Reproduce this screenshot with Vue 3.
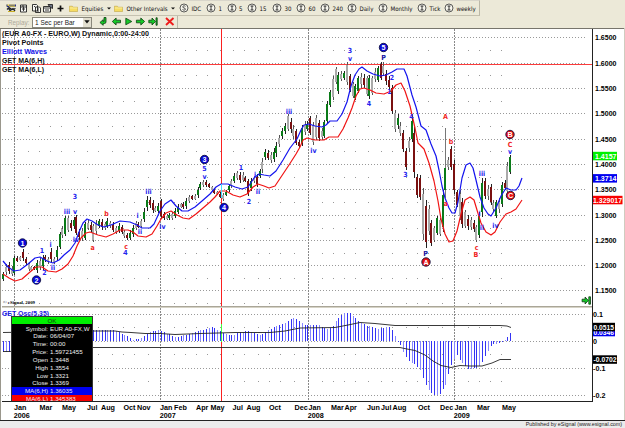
<template>
  <div class="window">
    <!-- Interval toolbar -->
    <div class="toolbar toolbar--intervals">
      <svg class="toolbar__icons" viewBox="0 0 69 15">
        <g>
          <path d="M6.5 3.5h9v2.5h-9z" fill="#e8d23c" />
          <path d="M7 3.5v2h2M10 3.5v2M12 3.5v2M14 3.5v2M15.5 3.5v2" stroke="#26309a" stroke-width="1" fill="none" />
          <path d="M7 8.5l2-2 3 2 3.5-1M8 6.5l2 3 3-2 2 2.5" stroke="#20242c" stroke-width="1.3" fill="none" />
          <path d="M8 10.5h7" stroke="#c9ae22" />
        </g>
        <g fill="#f8f8f4" stroke="#222" stroke-width=".9">
          <path d="M20.5 4h6v7h-6zM20.5 6h2.5V4M23.5 6h3M23.5 5.5V10M22 8h3" />
          <path d="M32.5 3.5h4l1 1V10h-5zM35.5 6h4l1 1v4.5h-5zM37 8h2M37 10h2M34 5.5h1" />
          <path d="M43.5 5.5h7v5.5h-7zM43.5 7h7M45 9h4" />
          <path d="M48 3.5h4.500v4L50 6z" fill="#6c7484" />
        </g>
        <path d="M60.5 4.5v6M57.5 7.5h6" stroke="#111" stroke-width="1.7" />
      </svg>
      <div v-for="menu in menus" :key="menu.label" class="menu" :style="{ width: menu.width + 'px' }">
        <svg class="menu__folder" viewBox="0 0 9 7">
          <path d="M.4 1.2h3l.7 1h4.5v4.300H.4z" fill="#f6dc62" stroke="#b69a34" stroke-width=".5" />
          <path d="M.8 3h7.5" stroke="#fff3a8" stroke-width=".8" />
        </svg>
        <span>{{ menu.label }}</span>
        <svg class="menu__caret" viewBox="0 0 4 3"><path d="M0 .5h4L2 2.6z" fill="#111" /></svg>
      </div>
      <div v-for="item in intervals" :key="item.label" class="interval" :style="{ width: item.width + 'px' }">
        <svg class="interval__icon" viewBox="0 0 10 10">
          <circle cx="5" cy="5" r="4" fill="#f7f6ee" stroke="#333" stroke-width=".8" />
          <path v-if="item.symbol" d="M6.5 3.3C5.5 2.4 3.6 2.8 3.7 4c.1 1.2 2.8.8 2.8 2.1 0 1.1-2 1.4-3 .4" fill="none" stroke="#222" stroke-width=".8" />
          <path v-else d="M3.5 3h3M5 3v4M3.5 7h3" stroke="#222" stroke-width=".9" />
        </svg>
        <span>{{ item.label }}</span>
      </div>
    </div>

    <!-- Replay toolbar -->
    <div class="toolbar toolbar--replay">
      <span class="replay__label">Replay:</span>
      <div class="replay__select">
        <span>1 Sec per Bar</span>
        <i class="replay__drop"><svg viewBox="0 0 6 4"><path d="M1 1h4L3 3.4z" fill="#111" /></svg></i>
      </div>
      <svg class="replay__icons" viewBox="92 16 85 12">
        <g fill="#16c928" stroke="#0b3d10" stroke-width=".8">
          <path d="M106 17.5v4.5q0 1.5-1.8 1.5h-1v1.8l-3.3-2.8 3.3-2.8v1.7h.8V17.5z" />
          <path d="M112.3 21.5l3.8-3.5v2.2h4.4v2.6h-4.4V25z" />
          <path d="M125.8 18.2l6 3.3-6 3.3z" />
          <path d="M144.6 21.5l-3.8-3.5v2.2h-4.4v2.6h4.4V25z" />
          <path d="M155.5 21.5L152 18v2.2h-3.2v2.6h3.2V25zM156 17.8h1.2v7.4H156z" />
        </g>
        <path d="M166 18l7.5 7M173.5 18l-7.5 7" stroke="#ee1c1c" stroke-width="1.9" />
      </svg>
    </div>

    <div class="chart">
      <svg class="chart__canvas" viewBox="0 28 625 393" width="625" height="393">
        <!-- Grid -->
        <g stroke="#999" stroke-width="1" stroke-dasharray="1 2" shape-rendering="crispEdges">
          <line v-for="y in gridY" :key="y" x1="2" :x2="587" :y1="y" :y2="y" />
          <line v-for="x in yearX" :key="x" :x1="x" :x2="x" y1="29" y2="401" stroke="#888" stroke-dasharray="2 1" />
        </g>
        <g fill="#999" shape-rendering="crispEdges">
          <rect v-for="(d, i) in dots" :key="i" :x="d[0]" :y="d[1]" width="1" height="1" />
        </g>

        <path d="M2 64.5h590.5" stroke="#fb3b3b" />
        <path d="M221.5 29V401" stroke="#fb2020" />

        <!-- Price bars -->
        <g shape-rendering="crispEdges">
          <g v-for="(b, i) in bars" :key="i">
            <rect :x="b.x" :y="b.high" width="1" :height="b.low - b.high" :fill="b.wick" />
            <rect :x="b.x - 1" :y="b.top" width="2" :height="b.bottom - b.top" :fill="b.color" />
          </g>
        </g>
        <polyline :points="maHigh" class="line line--blue" />
        <polyline :points="maLow" class="line line--red" />
        <path d="M221.5 184v14" stroke="#4df" />

        <!-- Wave counts -->
        <text v-for="(w, i) in waves" :key="'w' + i" :x="w[1]" :y="w[2] + 2.8" class="wave" :class="'wave--' + w[3]">{{ w[0] }}</text>
        <g v-for="(p, i) in pivots" :key="'p' + i">
          <circle :cx="p[1]" :cy="p[2]" r="4.2" :fill="p[3]" stroke="#101040" stroke-width=".9" />
          <text :x="p[1]" :y="p[2] + 2.6" class="pivot">{{ p[0] }}</text>
        </g>

        <!-- Studies legend -->
        <text v-for="t in titles" :key="t.text" x="2" :y="t.y" :textLength="t.w" lengthAdjust="spacingAndGlyphs" class="title" :fill="t.color || '#111'">{{ t.text }}</text>
        <text x="3" y="304.2" textLength="32" lengthAdjust="spacingAndGlyphs" class="copyright">© eSignal, 2009</text>

        <g fill="#13c926" stroke="#0a3a10" stroke-width=".8">
          <path d="M588.3 300.5l-3.2-3.5v2.2h-3v2.6h3v2.2zM588.8 296.8h1.7v7.4h-1.7z" />
        </g>

        <!-- Oscillator -->
        <rect x="2" y="306" width="590" height="1" fill="#aaa698" />
        <rect x="2" y="307" width="590" height="1" fill="#d6d3c6" />
        <g shape-rendering="crispEdges">
          <rect v-for="(o, i) in oscBars" :key="'o' + i" :x="o.x" :y="o.y" width="1" :height="o.h" :fill="o.color" />
        </g>
        <path d="M221.5 324v18" stroke="#4f4" />
        <polyline :points="oscUpper" class="band" />
        <polyline :points="oscLower" class="band" />

        <!-- Axes -->
        <path d="M592.5 28V401M2 401.5h591" stroke="#222" fill="none" />
        <text v-for="p in prices" :key="p[0]" x="595" :y="p[1] + 2.6" textLength="21.5" lengthAdjust="spacingAndGlyphs" class="axis">{{ p[0] }}</text>
        <text v-for="p in oscScale" :key="'s' + p[0]" x="593" :y="p[1] + 2.6" class="axis">{{ p[0] }}</text>
        <g v-for="t in tags" :key="t.text">
          <rect x="593" :y="t.y - 4.2" :width="t.w" height="8.5" :fill="t.bg" />
          <text :x="t.tx" :y="t.y + 2.6" :textLength="t.tw" lengthAdjust="spacingAndGlyphs" class="axis" fill="#fff">{{ t.text }}</text>
        </g>
        <text v-for="(m, i) in months" :key="'m' + i" :x="m[1]" y="409.5" class="axis">{{ m[0] }}</text>
        <text v-for="(x, i) in yearX" :key="'y' + i" :x="x - 0.7" y="418" class="axis">{{ 2006 + i }}</text>

        <path d="M0 420.5h625" stroke="#222" />
        <path d="M.5 28V420" stroke="#9a978c" />
        <path d="M624.5 28V420" stroke="#cfccc0" />
        <path d="M0 28.5h624" stroke="#77756c" />
        <text x="2" y="315.8" textLength="47" lengthAdjust="spacingAndGlyphs" class="title" fill="#2020e8">GET Osc(5,35)</text>
      </svg>

      <!-- Cursor data window -->
      <div class="cursor">
        <div class="cursor__ok">OK</div>
        <div v-for="r in readout" :key="r[0]" class="cursor__row" :class="r[2]">
          <span class="cursor__name">{{ r[0] }}</span>
          <span>{{ r[1] }}</span>
        </div>
      </div>
    </div>

    <div class="status">Published by eSignal (www.esignal.com)</div>
  </div>
</template>

<script setup>
const menus = [
  { label: 'Equities', width: 45 },
  { label: 'Other Intervals', width: 65 },
]

const intervals = [
  { label: 'IDC', width: 27, symbol: true },
  { label: '1', width: 20.5 },
  { label: '5', width: 20.5 },
  { label: '15', width: 25 },
  { label: '30', width: 24 },
  { label: '60', width: 24 },
  { label: '240', width: 27 },
  { label: 'Daily', width: 31 },
  { label: 'Monthly', width: 39 },
  { label: 'Tick', width: 27 },
  { label: 'weekly', width: 34 },
]

const titles = [
  { text: '(EUR A0-FX - EURO,W) Dynamic,0:00-24:00', y: 36.3, w: 147 },
  { text: 'Pivot Points', y: 45.3, w: 41.5 },
  { text: 'Elliott Waves', y: 54.4, w: 45, color: '#1010e8' },
  { text: 'GET MA(6,H)', y: 63.2, w: 42.5 },
  { text: 'GET MA(6,L)', y: 72.2, w: 42 },
]

const yearX = [14.5, 160.5, 308.5, 454.5]
const priceY = [37.5, 63.5, 88.5, 113.5, 139.5, 164.5, 189.5, 215.5, 240.5, 265.5, 290.5]
const gridY = [...priceY, 314.5, 341.5, 368.5, 395.5]

const monthOffsets = [14, 25, 36, 47, 60, 73, 84, 98, 109, 120, 134]
const dotRows = [50, 75, 101, 126, 151, 177, 202, 228, 253, 278, 303, 327, 354, 381]
const dots = []
for (const start of [14, 160, 308, 454]) {
  for (const off of monthOffsets) {
    if (start + off > 503) continue
    for (const y of dotRows) dots.push([start + off, y])
  }
}

const prices = priceY.map((y, i) => [(1.65 - i * 0.05).toFixed(4), y])
const oscScale = [['0.1', 314.5], ['0', 341.5], ['-0.1', 368.5], ['-0.2', 395.5]]

const tags = [
  { text: '1.4157', y: 156, w: 24, tx: 595, tw: 21.5, bg: '#00f000' },
  { text: '1.3714', y: 178.3, w: 24, tx: 595, tw: 21.5, bg: '#0000f0' },
  { text: '1.329017', y: 200, w: 29.5, tx: 593, tw: 29, bg: '#f80000' },
  { text: '0.0346', y: 332, w: 22, tx: 593.5, tw: 20.5, bg: '#0000f0' },
  { text: '0.0515', y: 327, w: 22, tx: 593.5, tw: 20.5, bg: '#000' },
  { text: '-0.0702', y: 359.5, w: 24, tx: 593.5, tw: 23, bg: '#000' },
]

const months = [
  ['Jan', 14], ['Mar', 39.5], ['May', 62], ['Jul', 87], ['Aug', 101], ['Oct', 123.5], ['Nov', 137],
  ['Jan', 160], ['Feb', 174], ['Apr', 196], ['May', 210.5], ['Jul', 232.5], ['Aug', 246.5], ['Oct', 269],
  ['Dec', 294.5], ['Jan', 308.5], ['Mar', 331], ['Apr', 344.5], ['Jun', 367], ['Jul', 381], ['Aug', 392.5],
  ['Oct', 418], ['Dec', 440], ['Jan', 454.5], ['Mar', 477], ['May', 502],
]

const readout = [
  ['Symbol:', 'EUR A0-FX,W'],
  ['Date:', '06/04/07'],
  ['Time:', '00:00'],
  ['Price:', '1.59721455'],
  ['Open', '1.3448'],
  ['High', '1.3554'],
  ['Low', '1.3321'],
  ['Close', '1.3369'],
  ['MA(6,H)', '1.36035', 'cursor__row--blue'],
  ['MA(6,L)', '1.345383', 'cursor__row--red'],
]

// high-low of every weekly bar, letter is the body colour
const barData = `272-281g 264-275k 262-274r 266-276k 256-275g 256-262r 256-261k 249-261r 257-265r 262-271k
266-271k 266-270r 260-273g 258-270k 255-270g 255-262r 257-264k 248-262r 257-264k 246-261g
232-249g 226-238k 216-236g 216-232k 220-231r 217-229g 215-235r 229-240r 228-241k 222-240g
220-230k 222-232r 224-242k 220-234k 219-228g 219-230r 222-230k 218-228g 221-228k 222-232r
226-234k 223-233g 225-234r 230-238k 233-240r 230-240g 225-237g 221-230k 222-228r 219-228k
208-222g 196-211g 197-208r 200-213r 206-212k 203-213g 199-218r 212-220r 214-220k 213-220g
212-220k 208-218g 204-214g 203-208k 202-209r 198-209g 195-203k 195-200r 194-200k 187-198g
182-190g 180-187k 180-187r 183-188r 186-191k 188-194r 191-195k 192-198r 193-201k 190-196g
184-192g 179-188k 173-183g 171-180k 172-183r 172-182k 176-182r 179-196r 178-191g 176-183k
174-187r 169-178g 158-173k 149-160g 150-160r 152-163k 148-162g 142-157g 135-147k 128-139g
123-134g 114-131k 118-133r 125-139k 129-145r 140-148r 125-146g 121-135k 121-131g 116-135r
122-145k 115-140k 120-141r 128-140k 120-138g 101-124g 90-107g 76-100k 67-84k 72-94g
71-81k 71-80g 62-85k 74-92r 82-98k 84-100g 76-93g 73-88k 74-88r 76-96k
75-99g 76-95k 68-82k 66-82g 62-80r 62-76k 70-85r 76-90r 85-114r 110-132k
114-129g 122-136k 130-152r 148-170r 137-152k 118-142g 127-178r 174-198r 175-200r 188-240k
200-248r 205-235k 220-246r 226-242k 216-235g 218-236k 190-232g 128-198g 157-170k 146-170r
160-194r 190-207r 190-220k 198-228r 210-228k 215-230r 217-230k 220-232r 225-242k 212-238g
178-217g 178-199r 185-200k 184-205r 200-212k 200-218g 198-213k 182-207g 180-190r 162-195k
155-174g`

const bodyColors = { g: '#0a7a18', r: '#7a1010', k: '#aaa' }
const step = 2.817

const bars = barData.split(/\s+/).map((s, i) => {
  const kind = s.slice(-1)
  const [high, low] = s.slice(0, -1).split('-').map(Number)
  const range = low - high
  const bar = {
    x: Math.round(3.2 + i * step),
    high,
    low,
    top: Math.round(high + range * (range > 15 ? 0.12 : 0.25)),
    bottom: Math.round(low - range * (range > 15 ? 0.12 : 0.25)),
    wick: kind === 'k' ? '#555' : '#222',
    color: bodyColors[kind],
  }
  // the December 2008 spike closes far below its high
  if (high === 128 && low === 198) {
    bar.top = 168
    bar.wick = '#777'
  }
  return bar
})

const maHigh = '3,261 8,267 14,271 20,270 28,264 35,258 40,257 47,261 53,263 59,260 64,255 70,250 75,243 79,232 83,223 87,219 92,221 98,225 104,227 111,225 120,221 130,222 137,225 142,228 150,228 154,224 160,211 165,204 171,200 176,206 182,211 188,211 195,207 202,201 210,194 216,187 221,184 228,184 235,187 242,189 248,187 254,178 259,174 264,175 270,176 276,171 283,160 290,148 297,139 301,130 304,125 309,124 315,126 322,127 326,125 330,121 337,121 342,114 347,102 351,86 355,75 359,69 362,67 367,71 373,74 380,76 386,75 392,72 397,69 404,69 407,76 412,95 416,107 421,126 426,130 431,144 436,156 439,170 442,186 445,198 449,208 452,213 455,213 458,202 462,178 466,165 470,163 473,168 476,180 480,197 484,208 488,214 491,216 496,208 501,196 506,188 511,190 516,190 519,186 522,178'
const maLow = '3,274 9,278 15,281 22,279 30,272 36,267 42,267 48,271 56,272 62,269 68,264 73,256 77,246 81,238 86,233 90,232 98,235 106,237 113,234 120,230 128,230 133,232 138,236 146,237 152,234 157,226 161,219 166,213 171,211 177,215 183,218 189,219 196,214 203,208 210,202 215,197 220,191 226,191 233,195 240,197 247,194 253,187 258,184 264,186 269,188 275,186 281,177 289,165 296,154 300,147 303,140 307,138 315,140 324,140 329,137 338,137 343,129 348,118 352,108 356,96 360,89 364,88 370,90 376,93 384,94 391,91 396,85 401,83 405,91 410,106 415,128 418,143 424,149 429,163 434,181 438,201 441,219 445,234 449,242 453,241 457,231 461,214 465,200 470,197 474,200 477,210 481,223 486,232 491,235 495,232 500,222 506,214 511,212 516,209 522,200'

const waves = [
  ['1', 42, 250, 'blue'], ['i', 50.5, 244, 'blue'], ['2', 44.5, 272, 'blue'], ['ii', 53, 267, 'blue'],
  ['iii', 67, 211.5, 'blue'], ['v', 75, 211, 'blue'], ['3', 75, 196.5, 'blue'], ['iv', 76, 239.5, 'blue'],
  ['a', 92.5, 247, 'red'], ['b', 106.5, 213.5, 'red'], ['c', 126, 246, 'red'], ['4', 125.5, 252.5, 'blue'],
  ['i', 137.5, 215.5, 'blue'], ['ii', 140, 231, 'blue'], ['iii', 148.5, 191, 'blue'], ['iv', 162.5, 226.5, 'blue'],
  ['5', 204.5, 168, 'blue'], ['v', 204.5, 176.5, 'blue'],
  ['1', 241, 167.5, 'blue'], ['i', 255, 174, 'blue'], ['2', 249, 201, 'blue'], ['ii', 258, 191.5, 'blue'],
  ['iii', 289, 111, 'blue'], ['iv', 313.5, 150, 'blue'],
  ['3', 350, 50, 'blue'], ['v', 350, 58, 'blue'], ['4', 369, 103, 'blue'], ['P', 383.5, 57, 'navy'],
  ['2', 392, 77, 'blue'], ['1', 389.5, 91.5, 'blue'], ['4', 411.5, 116, 'blue'], ['3', 405.5, 174.5, 'blue'],
  ['P', 425.5, 253.5, 'navy'], ['A', 445.5, 116.5, 'red'], ['b', 451, 141.5, 'red'], ['a', 445.5, 203, 'red'],
  ['iii', 482, 173, 'blue'], ['i', 479.5, 213, 'blue'], ['ii', 482, 227, 'blue'], ['iv', 495.5, 225.5, 'blue'],
  ['c', 476.5, 247.5, 'red'], ['B', 476, 254.5, 'red'], ['C', 510, 144, 'red'], ['v', 510, 151.5, 'blue'],
]

const pivots = [
  ['1', 22.5, 243, '#0808d8'], ['2', 36.5, 280, '#0808d8'], ['3', 204.5, 159.5, '#0808d8'],
  ['4', 224, 207.5, '#0808d8'], ['5', 383.5, 47.5, '#0808d8'],
  ['A', 426, 262, '#e81010'], ['B', 510, 134.5, '#e81010'], ['C', 510.5, 195.5, '#e81010'],
]

// oscillator envelope, bars are interpolated between these
const oscPoints = [
  [3, 352], [10, 352], [11, 341], [60, 330], [115, 330], [121, 333], [128, 337], [134, 340], [141, 338], [150, 332], [158, 330],
  [168, 334], [176, 337], [188, 334], [198, 331], [208, 328], [213, 327], [219, 331], [229, 335], [233, 335], [240, 332],
  [247, 331], [253, 333], [260, 335], [270, 329], [277, 326], [285, 323], [292, 318], [298, 320], [305, 325], [318, 325],
  [327, 329], [333, 326], [338, 318], [343, 313], [350, 313], [358, 321], [368, 326], [378, 329], [388, 326], [393, 331],
  [397, 340], [399, 343], [403, 352], [408, 361], [413, 363], [420, 370], [425, 383], [430, 392], [435, 396], [440, 394],
  [445, 385], [448, 374], [452, 362], [457, 355], [462, 363], [468, 369], [476, 368], [481, 364], [486, 354], [492, 344],
  [500, 343], [502, 341], [505, 340], [508, 336], [511, 331],
]

function oscAt(x) {
  const k = oscPoints.findIndex((p) => p[0] >= x)
  if (k < 1) return oscPoints[k < 0 ? oscPoints.length - 1 : 0][1]
  const [x0, y0] = oscPoints[k - 1]
  const [x1, y1] = oscPoints[k]
  return y0 + ((y1 - y0) * (x - x0)) / (x1 - x0)
}

const oscBars = bars.map((b, i) => {
  const y = Math.round(oscAt(b.x))
  return {
    x: b.x,
    y: Math.min(y, 341),
    h: Math.max(1, Math.abs(y - 341)),
    color: i % 3 === 1 ? '#8888ff' : '#3434f4',
  }
})

const oscUpper = '3,332.5 93,331 115,331 122,332 131,332.5 145,333.5 160,333.5 175,334.5 200,333.5 235,332.5 270,332.5 285,331 300,328 335,327.5 348,325 360,322.5 375,323.5 395,325.5 500,325.5 507,326 511,327.5'
const oscLower = '3,351.5 10,351.5 30,347.5 400,347.5 407,349 415,350.5 425,355 433,361 441,365.5 451,367.5 460,365.5 470,366 482,366 492,363 500,359.5 511,359.5'
</script>

<style>
body {
  margin: 0;
  background: #ece9d8;
}
</style>

<style scoped>
.window {
  width: 625px;
  height: 428px;
  display: flex;
  flex-direction: column;
  overflow: hidden;
  background: #ece9d8;
  font-family: 'Liberation Sans', Arial, sans-serif;
  font-size: 6.5px;
  color: #222;
}

/* Toolbars */
.toolbar {
  box-sizing: border-box;
  display: flex;
  align-items: center;
  flex-shrink: 0;
  white-space: nowrap;
  border-right: 1px solid #bbb8a8;
  border-bottom: 1px solid #c5c1b0;
}

.toolbar--intervals {
  width: 480px;
  height: 16px;
  border-top: 1px solid #d8d5ca;
  font-family: 'DejaVu Sans Condensed', 'DejaVu Sans', sans-serif;
  font-size: 6.1px;
  color: #111;
}

.toolbar--replay {
  width: 178px;
  height: 12px;
  border-bottom: 0;
}

.toolbar__icons {
  width: 69px;
  height: 15px;
  flex-shrink: 0;
}

.menu,
.interval {
  display: flex;
  align-items: center;
  flex-shrink: 0;
}

.menu {
  gap: 3.5px;
}

.menu__folder {
  width: 9px;
  height: 7px;
}

.menu__caret {
  width: 4px;
  height: 3px;
}

.interval {
  gap: 2.5px;
}

.interval__icon {
  width: 10px;
  height: 10px;
}

.replay__label {
  box-sizing: border-box;
  flex-shrink: 0;
  width: 32px;
  padding-left: 8px;
  color: #aca899;
  font-size: 6.3px;
}

.replay__select {
  box-sizing: border-box;
  flex-shrink: 0;
  width: 60px;
  height: 11px;
  display: flex;
  align-items: center;
  justify-content: space-between;
  padding-left: 2px;
  border: 1px solid #8a887c;
  background: #fff;
}

.replay__drop {
  width: 8px;
  height: 9px;
  display: flex;
  align-items: center;
  background: #e2dfd0;
}

.replay__icons {
  width: 85px;
  height: 12px;
  flex-shrink: 0;
}

/* Chart */
.chart {
  position: relative;
  height: 393px;
  background: #fff;
}

.chart__canvas {
  display: block;
}

.line {
  fill: none;
  stroke-width: 1.2;
  stroke-linejoin: round;
}

.line--blue {
  stroke: #1414ee;
}

.line--red {
  stroke: #f01414;
}

.band {
  fill: none;
  stroke: #222;
  stroke-width: 0.9;
}

.title {
  font-size: 7.5px;
  font-weight: 700;
}

.copyright {
  font-family: 'Liberation Serif', serif;
  font-size: 5px;
  font-weight: 700;
}

.axis {
  font-size: 7.2px;
  font-weight: 700;
}

.wave {
  font-family: 'DejaVu Sans Condensed', 'DejaVu Sans', sans-serif;
  font-size: 7px;
  font-weight: 700;
  text-anchor: middle;
}

.wave--blue {
  fill: #2424ee;
}

.wave--red {
  fill: #f02424;
}

.wave--navy {
  fill: #1010a0;
}

.pivot {
  font-size: 7.2px;
  font-weight: 700;
  text-anchor: middle;
  fill: #fff;
}

/* Cursor data window */
.cursor {
  position: absolute;
  left: 11px;
  top: 288px;
  box-sizing: border-box;
  width: 82px;
  height: 85px;
  overflow: hidden;
  border: 1px solid #333;
  border-bottom: 0;
  background: #000;
  color: #eee;
  font-size: 6.2px;
  line-height: 7.85px;
}

.cursor__ok {
  height: 7px;
  line-height: 7px;
  margin-bottom: 0.5px;
  text-align: center;
  background: #00f000;
  color: #0a400a;
}

.cursor__row {
  display: flex;
  gap: 2px;
  height: 7.85px;
  white-space: nowrap;
}

.cursor__name {
  width: 36px;
  text-align: right;
}

.cursor__row--blue {
  background: #0000f0;
}

.cursor__row--red {
  background: #f80000;
}

.status {
  height: 7px;
  padding-right: 3px;
  text-align: right;
  line-height: 6px;
  font-size: 5.35px;
  background: #ebebeb;
}
</style>
